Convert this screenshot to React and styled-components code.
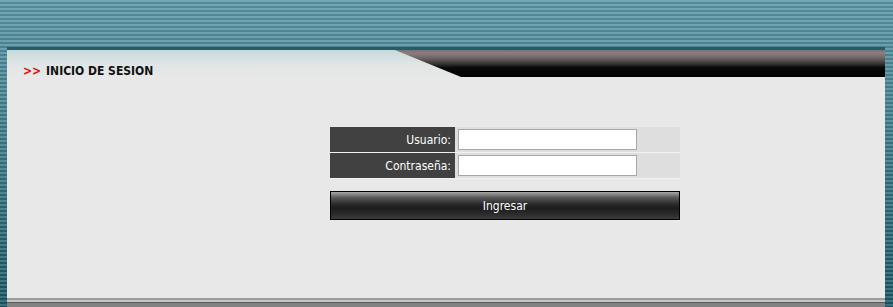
import React from "react";
import styled, { createGlobalStyle } from "styled-components";

const Global = createGlobalStyle`
  html, body { margin: 0; padding: 0; height: 100%; }
  body {
    overflow: hidden;
    background:
      repeating-linear-gradient(to bottom, rgba(255,255,255,0.15) 0 2px, rgba(0,0,0,0.09) 2px 4px),
      linear-gradient(to bottom, #5c99a7 0%, #417f8e 40%, #1c5766 100%);
    font-family: "DejaVu Sans Condensed", "DejaVu Sans", sans-serif;
  }
`;

const Page = styled.div`
  padding: 47px 8px 0 7px;
`;

const Panel = styled.div`
  border-top: 3px solid #2b5a65;
  background: #e8e8e8;
`;

const Header = styled.div`
  display: flex;
  height: 27px;
  background: linear-gradient(to bottom, #c8d9db 0%, #dfe5e5 50%, #e8e8e8 100%);
`;

const TitleArea = styled.div`
  flex: 0 0 388px;
  display: flex;
  align-items: flex-end;
  padding: 0 0 0 16px;
  box-sizing: border-box;
  font-size: 12px;
  line-height: 14px;
  font-weight: bold;
  color: #111;
  gap: 5px;
  transform: translateY(1px);
`;

const Arrows = styled.span`
  color: #e01010;
`;

const Tab = styled.div`
  flex: 1;
  clip-path: polygon(0 0, 100% 0, 100% 100%, 66px 100%);
  background: linear-gradient(to bottom, #7c7070 0%, #8c7e7e 12%, #6e6464 30%, #3a3636 50%, #0a0a0a 65%, #000 100%);
`;

const Body = styled.div`
  height: 220px;
  box-sizing: border-box;
  padding: 50px 0 0 323px;
`;

const Form = styled.form`
  width: 350px;
  display: flex;
  flex-direction: column;
  margin: 0;
`;

const Row = styled.div`
  display: flex;
  height: 25px;
  border-bottom: 1px solid #f2f2f2;
`;

const Label = styled.label`
  flex: 0 0 125px;
  background: #414141;
  color: #fff;
  font-size: 12px;
  display: flex;
  align-items: center;
  justify-content: flex-end;
  padding-right: 4px;
  box-sizing: border-box;
`;

const Field = styled.div`
  flex: 1;
  background: #dedede;
  display: flex;
  align-items: center;
  padding-left: 3px;
`;

const Input = styled.input`
  width: 179px;
  height: 21px;
  box-sizing: border-box;
  border: 1px solid #a8a8a8;
  background: #fff;
  margin: 0;
  padding: 0 2px;
  outline: none;
`;

const Button = styled.button`
  margin-top: 12px;
  height: 29px;
  width: 350px;
  border: 1px solid #000;
  color: #fff;
  font-family: inherit;
  font-size: 12px;
  background: linear-gradient(to bottom, #a8a8a8 0%, #5a5a5a 20%, #2a2a2a 45%, #1c1c1c 60%, #2e2e2e 85%, #3c3c3c 100%);
  cursor: pointer;
  padding: 0;
`;

const Footer = styled.div`
  height: 12px;
  background: linear-gradient(to bottom, #e8e8e8 0 1px, #9c9c9c 1px 3px, #c6c6c6 3px 5px, #5a5a5a 5px 6px, #828282 6px 100%);
`;

export default function App() {
  return (
    <>
      <Global />
      <Page>
        <Panel>
          <Header>
            <TitleArea>
              <Arrows>&gt;&gt;</Arrows>
              <span>INICIO DE SESION</span>
            </TitleArea>
            <Tab />
          </Header>
          <Body>
            <Form onSubmit={(e) => e.preventDefault()}>
              <Row>
                <Label htmlFor="usuario">Usuario:</Label>
                <Field>
                  <Input id="usuario" type="text" />
                </Field>
              </Row>
              <Row>
                <Label htmlFor="clave">Contraseña:</Label>
                <Field>
                  <Input id="clave" type="password" />
                </Field>
              </Row>
              <Button type="submit">Ingresar</Button>
            </Form>
          </Body>
        </Panel>
        <Footer />
      </Page>
    </>
  );
}
